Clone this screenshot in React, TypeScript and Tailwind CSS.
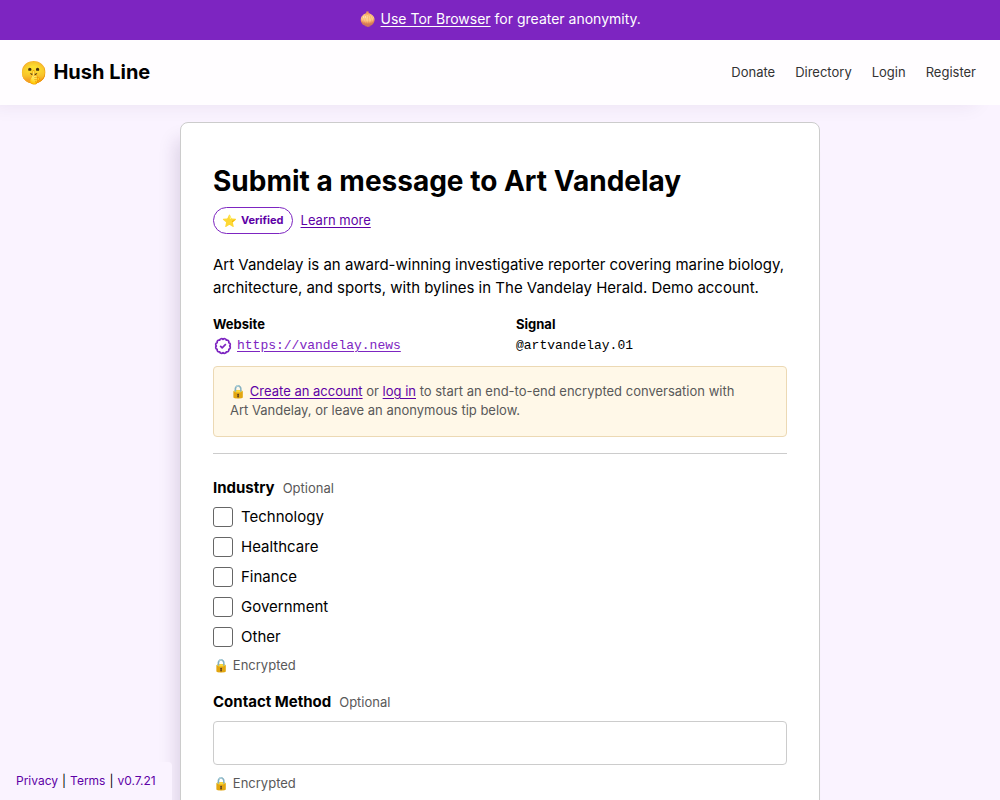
import { useState } from "react";
import clsx from "clsx";

const navLinks = ["Donate", "Directory", "Login", "Register"];
const industries = ["Technology", "Healthcare", "Finance", "Government", "Other"];

const linkClass = "text-[#5e01a6] underline underline-offset-2";

export default function App() {
  return (
    <div className="min-h-screen bg-[#faf3ff] font-['Inter','Noto_Color_Emoji',sans-serif] text-[15px] text-black">
      <div className="flex h-10 items-center justify-center bg-[#7d25c1] pb-0.5 text-sm text-white">
        <p>
          🧅{" "}
          <a href="#tor" className="underline underline-offset-2">
            Use Tor Browser
          </a>{" "}
          for greater anonymity.
        </p>
      </div>
      <Header />
      <main className="mx-auto mt-[17px] max-w-[640px] rounded-lg border border-[#cccccc] bg-white px-8 pt-10 pb-12 shadow-[-10px_12px_18px_-6px_rgba(50,20,80,0.15)]">
        <ProfileIntro />
        <hr className="mt-4 border-[#cccccc]" />
        <MessageForm />
      </main>
      <Footer />
    </div>
  );
}

const Header = () => (
  <header className="flex h-[65px] items-center justify-between bg-[#fffdff] pr-6 pl-5 shadow-[-16px_8px_20px_-8px_rgba(50,20,80,0.08)]">
    <a href="#home" className="flex items-center gap-1.5 text-xl font-bold">
      <span className="text-[22px]">🤫</span>
      Hush Line
    </a>
    <nav className="flex gap-5 text-[13px] text-[#333333]">
      {navLinks.map((label) => (
        <a key={label} href={`#${label.toLowerCase()}`}>
          {label}
        </a>
      ))}
    </nav>
  </header>
);

const ProfileIntro = () => (
  <section>
    <h1 className="text-[28px] leading-9 font-bold">
      Submit a message to Art Vandelay
    </h1>
    <div className="mt-2 flex items-center gap-2">
      <span className="flex h-[27px] items-center gap-1 rounded-full border border-[#7d25c1] px-2 text-[11px] font-bold text-[#5e01a6]">
        <span className="text-xs">⭐️</span> Verified
      </span>
      <a href="#verified" className={clsx(linkClass, "text-[13px]")}>
        Learn more
      </a>
    </div>
    <p className="mt-[19px] leading-[23px]">
      Art Vandelay is an award-winning investigative reporter covering marine
      biology, architecture, and sports, with bylines in The Vandelay Herald.
      Demo account.
    </p>
    <dl className="mt-[15px] grid grid-cols-2 gap-8 text-[13px] leading-[21px]">
      <div>
        <dt className="font-bold">Website</dt>
        <dd className="flex items-center gap-1 font-['Liberation_Mono',monospace]">
          <VerifiedIcon />
          <a
            href="#website"
            className="text-[#7d25c1] underline underline-offset-2"
          >
            https://vandelay.news
          </a>
        </dd>
      </div>
      <div>
        <dt className="font-bold">Signal</dt>
        <dd className="font-['Liberation_Mono',monospace]">@artvandelay.01</dd>
      </div>
    </dl>
    <div className="mt-[10px] rounded border border-[#ecd9b4] bg-[#fff8e8] px-4 pt-[15px] pb-4 text-[13px] leading-[19px] text-[#595959]">
      <p>
        🔒{" "}
        <a href="#register" className={linkClass}>
          Create an account
        </a>{" "}
        or{" "}
        <a href="#login" className={linkClass}>
          log in
        </a>{" "}
        to start an end-to-end encrypted conversation with Art&nbsp;Vandelay,
        or leave an anonymous tip below.
      </p>
    </div>
  </section>
);

const MessageForm = () => {
  const [selected, setSelected] = useState<string[]>([]);
  const [contact, setContact] = useState("");

  const toggle = (name: string) =>
    setSelected((prev) =>
      prev.includes(name) ? prev.filter((n) => n !== name) : [...prev, name]
    );

  return (
    <form className="mt-6">
      <fieldset>
        <legend className="flex items-baseline gap-2 leading-5 font-bold">
          Industry <Optional />
        </legend>
        <div className="mt-[9px] flex flex-col gap-[10px]">
          {industries.map((name) => (
            <label key={name} className="flex items-center gap-2 leading-5">
              <input
                type="checkbox"
                checked={selected.includes(name)}
                onChange={() => toggle(name)}
                className="size-5 appearance-none rounded-[3px] border border-[#666666] bg-white checked:bg-[#7d25c1]"
              />
              {name}
            </label>
          ))}
        </div>
        <Encrypted />
      </fieldset>
      <div className="mt-[17px]">
        <label
          htmlFor="contact"
          className="flex items-baseline gap-2 leading-5 font-bold"
        >
          Contact Method <Optional />
        </label>
        <input
          id="contact"
          type="text"
          value={contact}
          onChange={(e) => setContact(e.target.value)}
          className="mt-[9px] block h-11 w-full rounded border border-[#cccccc] bg-white px-3"
        />
        <Encrypted />
      </div>
    </form>
  );
};

const Optional = () => (
  <span className="text-[13px] font-normal text-[#595959]">Optional</span>
);

const Encrypted = () => (
  <p className="mt-2 text-[13px] leading-5 text-[#595959]">🔒 Encrypted</p>
);

const VerifiedIcon = () => (
  <svg
    viewBox="0 0 24 24"
    className="size-5 fill-none stroke-[#7d25c1] stroke-2"
    strokeLinecap="round"
    strokeLinejoin="round"
    aria-hidden="true"
  >
    <path d="M20 12A2.3 2.3 0 0 1 18.93 16A2.3 2.3 0 0 1 16 18.93A2.3 2.3 0 0 1 12 20A2.3 2.3 0 0 1 8 18.93A2.3 2.3 0 0 1 5.07 16A2.3 2.3 0 0 1 4 12A2.3 2.3 0 0 1 5.07 8A2.3 2.3 0 0 1 8 5.07A2.3 2.3 0 0 1 12 4A2.3 2.3 0 0 1 16 5.07A2.3 2.3 0 0 1 18.93 8A2.3 2.3 0 0 1 20 12Z" />
    <path d="M8.6 11.8L11 14.2L15.4 9.8" strokeLinecap="butt" />
  </svg>
);

const Footer = () => (
  <footer className="fixed bottom-0 left-0 flex h-[38px] items-center gap-1 rounded-tr bg-[#faf3ff] px-4 text-xs">
    <a href="#privacy" className="text-[#5e01a6]">
      Privacy
    </a>
    |
    <a href="#terms" className="text-[#5e01a6]">
      Terms
    </a>
    |
    <a href="#version" className="text-[#5e01a6]">
      v0.7.21
    </a>
  </footer>
);
